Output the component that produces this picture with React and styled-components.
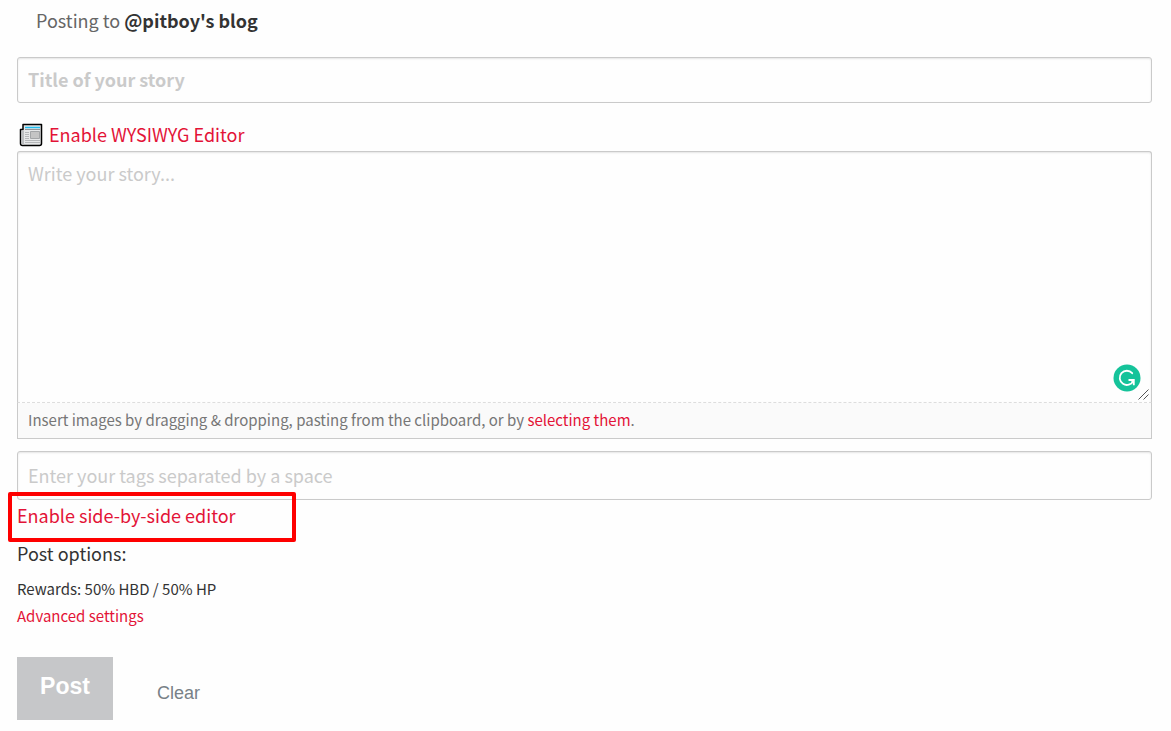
import React, { useState } from 'react';
import styled, { createGlobalStyle } from 'styled-components';


function App() {
    const [title, setTitle] = useState('');
    const [story, setStory] = useState('');
    const [tags, setTags] = useState('');

    const clearAll = () => {
        setTitle('');
        setStory('');
        setTags('');
    };

  return (
    <>
        <GlobalStyle />
        <Form onSubmit={(e) => e.preventDefault()}>
            <PostingTo>Posting to <strong>@pitboy's blog</strong></PostingTo>

            <TitleInput
                aria-label="Title"
                placeholder="Title of your story"
                value={title}
                onChange={(e) => setTitle(e.target.value)}
            />

            <EditorSwitch>
                <NewspaperIcon />
                <Link href="#">Enable WYSIWYG Editor</Link>
            </EditorSwitch>

            <Editor>
                <StoryArea
                    aria-label="Story"
                    placeholder="Write your story..."
                    value={story}
                    onChange={(e) => setStory(e.target.value)}
                />
                <Grammar>
                    <GrammarIcon />
                </Grammar>
                <Grip>
                    <GripIcon />
                </Grip>
                <Hint>
                    Insert images by dragging &amp; dropping, pasting from the clipboard, or by <Link href="#">selecting them</Link>.
                </Hint>
            </Editor>

            <TagsInput
                aria-label="Tags"
                placeholder="Enter your tags separated by a space"
                value={tags}
                onChange={(e) => setTags(e.target.value)}
            />

            <SideBySide>
                <Link href="#">Enable side-by-side editor</Link>
                <Highlight />
            </SideBySide>

            <OptionsTitle>Post options:</OptionsTitle>
            <SmallRow>Rewards: 50% HBD / 50% HP</SmallRow>
            <SmallRow><Link href="#">Advanced settings</Link></SmallRow>

            <Actions>
                <PostButton type="submit">Post</PostButton>
                <ClearButton type="button" onClick={clearAll}>Clear</ClearButton>
            </Actions>
        </Form>
    </>
  )
}

export default App;

function NewspaperIcon() {
  return (
    <svg width="24" height="26" viewBox="0 -2 24 26" aria-hidden="true">
        <path d="M4 1.500h18.500v19a2 2 0 0 1-2 2h-17a2 2 0 0 1-2-2V6.500H4z" fill="#e6e7e8" stroke="#000" strokeWidth="1.500" strokeLinejoin="round" />
        <path d="M2.500 7.500H5v14H3.500a1 1 0 0 1-1-1z" fill="#bcbec0" />
        <path d="M6 4.500h15" stroke="#1fbdf0" strokeWidth="1.500" />
        <path d="M6 6.500h15" stroke="#939598" />
        <path d="M6 9.500h4M6 11.500h4M6 13.500h4M6 15.500h4M6 17.500h15M6 19.500h15" stroke="#b5b7b9" />
        <path d="M11.500 8.500h9v7h-9z" fill="#c4c4c4" stroke="#a3a5a7" />
    </svg>
  )
}

function GrammarIcon() {
  return (
    <svg width="28" height="28" viewBox="0 0 28 28" aria-hidden="true">
        <circle cx="14" cy="14" r="13.500" fill="#15c39a" />
        <path d="M19.200 9.200A7.100 7.100 0 1 0 20.300 16.800" fill="none" stroke="#fff" strokeWidth="1.800" strokeLinecap="round" />
        <path d="M15.500 16h5.300v5.200" fill="none" stroke="#fff" strokeWidth="1.800" />
        <path d="M17 16h4v4z" fill="#fff" />
    </svg>
  )
}

function GripIcon() {
  return (
    <svg width="11" height="11" viewBox="0 0 11 11" aria-hidden="true">
        <path d="M0.500 10.500l10-10M5.500 10.500l5-5" stroke="#555" />
    </svg>
  )
}

const GlobalStyle = createGlobalStyle`
    *{
        box-sizing : border-box;
    }

    body{
        margin : 0;
        background-color : #fefefe;
        color : #333;
        font-family : "Noto Sans CJK SC", "Noto Sans", sans-serif;
        font-size : 18px;
        line-height : 28px;
    }

`

const Form = styled.form`
    display : flex;
    flex-direction : column;
    padding : 6px 19px 11px 17px;

`

const Link = styled.a`
    color : #e31337;
    text-decoration : none;

`

const PostingTo = styled.div`
    padding-left : 19px;
    color : #666;
    strong{
        color : #333;
        font-weight : 600;
    }

`

const Field = styled.input`
    width : 100%;
    padding : 0 10px 2px;
    border : 1px solid #cacaca;
    border-radius : 3px;
    background-color : #fefefe;
    box-shadow : inset 0 1px 2px rgba(10, 10, 10, 0.1);
    color : #333;
    font-family : inherit;
    font-size : 18px;
    outline : none;
    &::placeholder{
        color : #cacaca;
        opacity : 1;
    }

`

const TitleInput = styled(Field)`
    height : 46px;
    margin-top : 23px;
    font-weight : 600;

`

const EditorSwitch = styled.div`
    display : flex;
    align-items : center;
    gap : 6px;
    padding-left : 2px;
    margin-top : 17px;

`

const Editor = styled.div`
    position : relative;
    margin-top : 3px;

`

const StoryArea = styled.textarea`
    display : block;
    width : 100%;
    height : 252px;
    padding : 7px 10px;
    border : 1px solid #cacaca;
    border-bottom : 1px dashed #ddd;
    border-radius : 3px 3px 0 0;
    background-color : #fefefe;
    box-shadow : inset 0 1px 2px rgba(10, 10, 10, 0.1);
    color : #333;
    font-family : inherit;
    font-size : 18px;
    line-height : 28px;
    outline : none;
    resize : none;
    &::placeholder{
        color : #cacaca;
        opacity : 1;
    }

`

const Grammar = styled.span`
    position : absolute;
    right : 11px;
    top : 213px;
    display : flex;

`

const Grip = styled.span`
    position : absolute;
    right : 3px;
    top : 238px;
    display : flex;

`

const Hint = styled.div`
    padding : 3px 10px 5px;
    border : 1px solid #cacaca;
    border-top : 0;
    background-color : #fafafa;
    color : #767676;
    font-size : 15px;
    line-height : 27px;

`

const TagsInput = styled(Field)`
    height : 49px;
    margin-top : 12px;

`

const SideBySide = styled.div`
    position : relative;
    margin-top : 1px;

`

const Highlight = styled.span`
    position : absolute;
    top : -9px;
    left : -9px;
    width : 288px;
    height : 50px;
    border : 4px solid #fe0000;
    border-radius : 2px;
    pointer-events : none;

`

const OptionsTitle = styled.div`
    margin : 10px 0 8px;

`

const SmallRow = styled.div`
    font-size : 15px;
    line-height : 27px;

`

const Actions = styled.div`
    display : flex;
    align-items : flex-end;
    gap : 20px;
    margin-top : 28px;

`

const PostButton = styled.button`
    width : 96px;
    height : 63px;
    padding : 0 0 4px;
    border : 0;
    background-color : #c6c7c9;
    color : #fff;
    font-family : "Liberation Sans", Arial, sans-serif;
    font-size : 23px;
    font-weight : 700;
    cursor : pointer;

`

const ClearButton = styled.button`
    padding : 16px 24px;
    border : 0;
    background : transparent;
    color : #788187;
    font-family : "Liberation Sans", Arial, sans-serif;
    font-size : 18px;
    cursor : pointer;

`
